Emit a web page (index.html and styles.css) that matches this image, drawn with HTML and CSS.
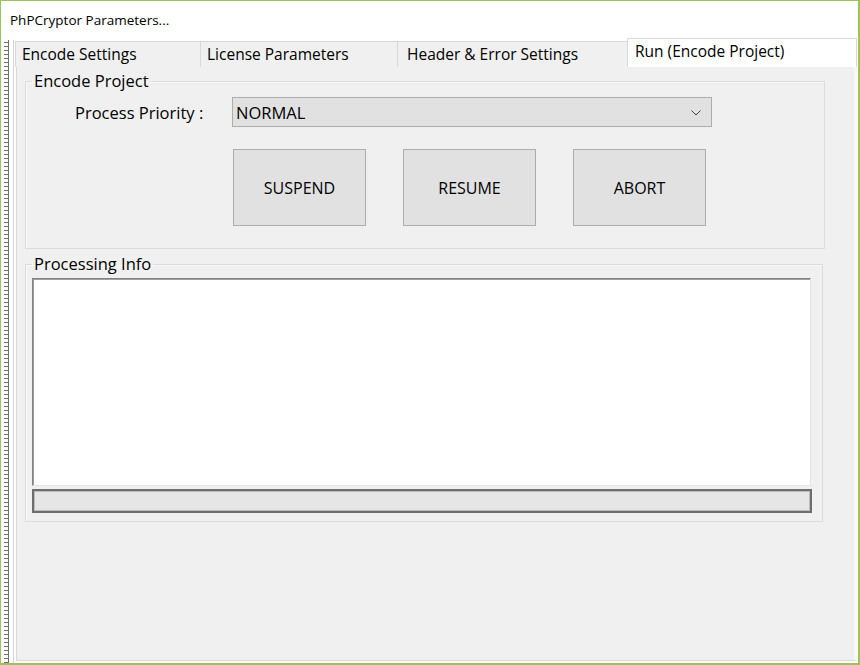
FILE: index.html
```html
<!DOCTYPE html>
<html>
<head>
<meta charset="utf-8">
<link rel="stylesheet" href="styles.css">
</head>
<body>
<div class="window">
  <div class="titlebar">PhPCryptor Parameters...</div>
  <div class="main">
    <div class="grip"></div>
    <div class="tabarea">
      <div class="tabbar">
        <div class="tab t1">Encode Settings</div>
        <div class="tab t2">License Parameters</div>
        <div class="tab t3">Header &amp; Error Settings</div>
        <div class="tab active">Run (Encode Project)</div>
      </div>
      <div class="panel">
        <fieldset class="group g1">
          <legend>Encode Project</legend>
          <div class="prow">
            <span class="plabel">Process Priority :</span>
            <div class="select">
              <span>NORMAL</span>
              <svg class="chev" width="10" height="6" viewBox="0 0 10 6"><path d="M0.5 0.5 L5 5 L9.5 0.5" fill="none" stroke="#444" stroke-width="1"/></svg>
            </div>
          </div>
          <div class="brow">
            <button class="btn">SUSPEND</button>
            <button class="btn">RESUME</button>
            <button class="btn">ABORT</button>
          </div>
        </fieldset>
        <fieldset class="group g2">
          <legend>Processing Info</legend>
          <div class="textbox"></div>
          <div class="progress"></div>
        </fieldset>
      </div>
    </div>
  </div>
</div>
</body>
</html>
```
FILE: styles.css
```css
html, body { margin: 0; padding: 0; }
body { width: 860px; height: 665px; overflow: hidden; background: #fff; font-family: "Open Sans", "Noto Sans", sans-serif; color: #000; }
.window { width: 860px; height: 665px; box-sizing: border-box; border: 1px solid #9bc35a; border-bottom-width: 2px; border-right-width: 2px; background: #fff; display: flex; flex-direction: column; }
.titlebar { height: 37px; box-sizing: border-box; padding: 10px 0 0 9px; font-size: 13.5px; color: #000; flex-shrink: 0; }
.main { flex: 1; display: flex; min-height: 0; }
.grip { width: 13px; flex-shrink: 0; box-sizing: border-box; border-right: 1px solid #d4d4d4; background-color: #fff;
  background-image:
    linear-gradient(to bottom, transparent 3px, #707070 3px, #707070 4px),
    linear-gradient(to bottom, #707070 3px, transparent 3px);
  background-size: 5px 4px, 1px 4px;
  background-position: 3px 3px, 7px 3px;
  background-repeat: repeat-y, repeat-y;
  margin-top: 2px;
}
.tabarea { flex: 1; min-width: 0; display: flex; flex-direction: column; padding-left: 1px; padding-right: 1px; }
.tabbar { display: flex; height: 29px; align-items: flex-end; flex-shrink: 0; }
.tab { flex-shrink: 0; height: 26px; box-sizing: border-box; background: #f0f0f0; border: 1px solid #d9d9d9; border-bottom: none; border-right: none; font-size: 15.5px; padding: 1px 0 0 6px; color: #000; white-space: nowrap; }
.t1 { width: 185px; }
.t2 { width: 197px; }
.t3 { width: 230px; padding-left: 9px; }
.active { width: 230px; height: 29px; background: #fff; border: 1px solid #d9d9d9; border-bottom: none; padding: 1px 0 0 7px; }
.panel { flex: 1; background: #f0f0f0; border: 1px solid #d9d9d9; border-top: none; border-right: 3px solid #f7f7f7; margin-left: 1px; padding: 4px 0 0 8px; box-sizing: border-box; margin-bottom: 2px; }
.group { margin: 0; border: 1px solid #dcdcdc; box-shadow: inset 1px 1px 0 #f8f8f8; padding: 0; box-sizing: border-box; }
.group legend { font-size: 16.5px; padding: 0 2px; margin-left: 6px; line-height: 20px; }
.g1 { width: 800px; height: 178px; }
.g2 { width: 798px; height: 268px; margin-top: 5px; }
.prow { display: flex; align-items: center; margin-top: 6px; }
.plabel { font-size: 16.5px; margin-left: 49px; width: 157px; }
.select { width: 480px; height: 30px; box-sizing: border-box; background: #e1e1e1; border: 1px solid #adadad; display: flex; align-items: center; justify-content: space-between; padding: 0 10px 0 3px; font-size: 16.5px; }
.chev { margin-top: 1px; }
.brow { display: flex; gap: 37px; margin-left: 207px; margin-top: 22px; }
.btn { width: 133px; height: 77px; background: #e1e1e1; border: 1px solid #adadad; font-family: inherit; font-size: 16px; color: #000; padding: 0; }
.textbox { width: 779px; height: 208px; box-sizing: border-box; margin: 4px 0 0 6px; background: #fff; border: 1px solid; border-color: #828282 #e3e3e3 #e3e3e3 #828282; box-shadow: inset 1px 1px 0 #a0a0a0; }
.progress { width: 780px; height: 24px; box-sizing: border-box; margin: 3px 0 0 6px; background: #e6e6e6; border: 2px solid #6d6d6d; box-shadow: inset 0 0 0 1px #bcbcbc; }
```
